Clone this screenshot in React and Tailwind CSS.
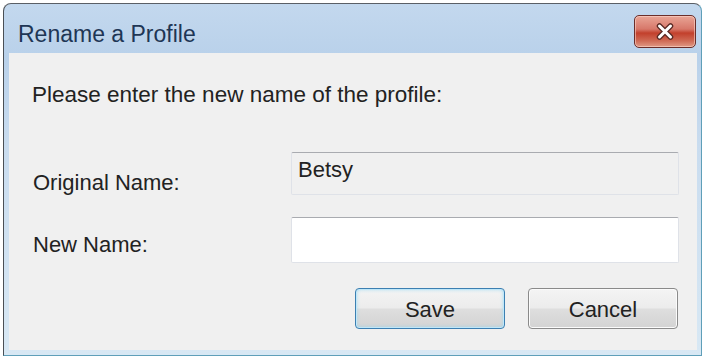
import React from "react";

const font = "font-['Liberation_Sans',Arial,sans-serif]";

const CloseButton = () => {
  return (
    <div className="w-[62px] h-[33px] rounded-[5px] border border-[#6b2e2a] bg-[linear-gradient(to_bottom,#e9a596_0%,#d7786a_42%,#c2402c_55%,#cf6a55_80%,#e09a86_100%)] shadow-[inset_0_0_0_1px_rgba(255,220,210,0.55)] flex items-center justify-center">
      <svg width="18" height="17" viewBox="0 0 18 17">
        <path d="M3.5 3 L14.5 14 M14.5 3 L3.5 14" stroke="#5a2a24" strokeWidth="5.5" strokeLinecap="round" />
        <path d="M3.5 3 L14.5 14 M14.5 3 L3.5 14" stroke="#ffffff" strokeWidth="3" strokeLinecap="round" />
      </svg>
    </div>
  );
};

const Field = ({ value, readOnly }) => {
  return (
    <div
      className={
        "w-[388px] rounded-[2px] border border-[#dfe2e8] border-t-[#a9abb0] flex items-start pl-[6px] " +
        (readOnly ? "h-[43px] bg-[#f0f0f0] pt-[4px]" : "h-[46px] bg-white")
      }
    >
      <span className="text-[22px] leading-[26px] text-[#222]">{value}</span>
    </div>
  );
};

const Button = ({ text, focused }) => {
  return (
    <div
      className={
        "w-[150px] h-[41px] rounded-[4px] border flex items-center justify-center pt-[3px] bg-[linear-gradient(to_bottom,#f4f4f4_0%,#ececec_48%,#dedede_52%,#d3d3d3_100%)] " +
        (focused
          ? "border-[#3c7fb1] shadow-[inset_0_0_0_1px_#bfe7f9,inset_0_0_4px_#8fd3f0]"
          : "border-[#8a8a8a] shadow-[inset_0_0_0_1px_#fbfbfb]")
      }
    >
      <span className="text-[22px] leading-[26px] text-[#222]">{text}</span>
    </div>
  );
};

export default function App() {
  return (
    <div className={"w-[706px] h-[357px] bg-white pt-[3px] pl-[3px] " + font}>
      <div className="w-[699px] h-[353px] rounded-t-[8px] border border-l-[#4a4f55] border-t-[#5a5f66] border-r-[#5f9fb9] border-b-[#5f9fb9] bg-[linear-gradient(to_bottom,#c3d8ee_0%,#b9d1ea_15%,#c9dcef_40%,#d8e8f4_100%)] flex flex-col overflow-hidden">
        <div className="h-[49px] flex items-start justify-between pl-[14px] pr-[5px] pt-[11px] shrink-0">
          <span className="text-[23px] leading-[28px] text-[#1e3655] mt-[5px]">Rename a Profile</span>
          <CloseButton />
        </div>
        <div className="flex-1 ml-[5px] mr-[4px] mb-[5px] bg-[#f0f0f0] flex flex-col">
          <p className="pt-[29px] pl-[23px] text-[22.5px] leading-[26px] text-[#222]">
            Please enter the new name of the profile:
          </p>
          <div className="mt-[44px] flex items-start">
            <span className="w-[282px] shrink-0 pl-[24px] pt-[18px] text-[22px] leading-[26px] text-[#222]">Original Name:</span>
            <Field value="Betsy" readOnly />
          </div>
          <div className="mt-[21px] flex items-start">
            <span className="w-[282px] shrink-0 pl-[24px] pt-[15px] text-[22px] leading-[26px] text-[#222]">New Name:</span>
            <Field value="" />
          </div>
          <div className="mt-[25px] flex justify-end gap-[23px] pr-[19px]">
            <Button text="Save" focused />
            <Button text="Cancel" />
          </div>
        </div>
      </div>
    </div>
  );
}
